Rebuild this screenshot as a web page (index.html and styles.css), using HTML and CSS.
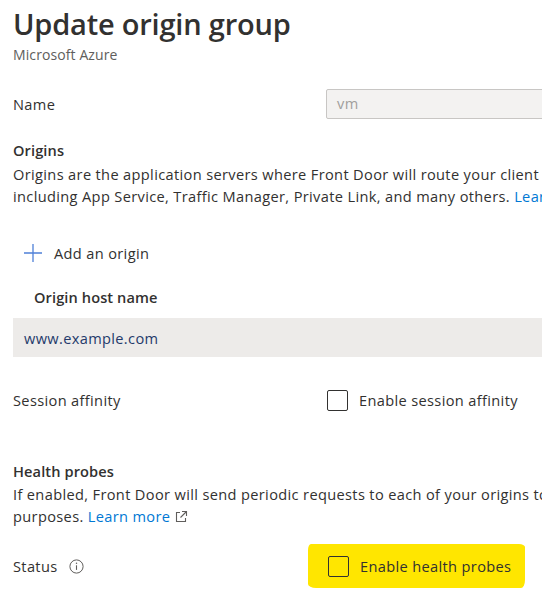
FILE: index.html
```html
<!DOCTYPE html>
<html>
<head>
<meta charset="utf-8">
<link rel="stylesheet" href="styles.css">
</head>
<body>
<div class="page">
  <h1 class="title">Update origin group</h1>
  <div class="subtitle">Microsoft Azure</div>

  <div class="field name-row">
    <div class="label">Name</div>
    <div class="input">vm</div>
  </div>

  <div class="section origins">
    <div class="heading">Origins</div>
    <div class="line">Origins are the application servers where Front Door will route your client</div>
    <div class="line">including App Service, Traffic Manager, Private Link, and many others. <span class="link">Learn more</span></div>
  </div>

  <div class="add">
    <svg class="plus" width="20" height="20" viewBox="0 0 20 20"><path d="M10 1v18M1 10h18" stroke="#4f80d8" stroke-width="1.3" fill="none"/></svg>
    <span>Add an origin</span>
  </div>

  <div class="col-head">Origin host name</div>
  <div class="grid-row">www.example.com</div>

  <div class="field session-row">
    <div class="label">Session affinity</div>
    <div class="check"><span class="box"></span><span>Enable session affinity</span></div>
  </div>

  <div class="section health">
    <div class="heading">Health probes</div>
    <div class="line">If enabled, Front Door will send periodic requests to each of your origins to</div>
    <div class="line">purposes. <span class="link">Learn more</span> <svg class="ext" width="14" height="14" viewBox="0 0 14 14"><path d="M6 2.5H2.5v9h9V8" stroke="#605e5c" stroke-width="1.1" fill="none"/><path d="M8 1.5h4.5V6M12.5 1.5L6.5 7.5" stroke="#605e5c" stroke-width="1.1" fill="none"/></svg></div>
  </div>

  <div class="field status-row">
    <div class="label">Status <svg class="info" width="15" height="15" viewBox="0 0 15 15"><circle cx="7.5" cy="7.5" r="6.6" stroke="#605e5c" stroke-width="1" fill="none"/><path d="M7.5 6.3v4.6" stroke="#605e5c" stroke-width="1.1"/><circle cx="7.5" cy="4.3" r="0.75" fill="#605e5c"/></svg></div>
    <div class="highlight">
      <div class="check"><span class="box"></span><span>Enable health probes</span></div>
    </div>
  </div>
</div>
</body>
</html>
```

FILE: styles.css
```css
html, body {
  margin: 0;
  padding: 0;
  background: #ffffff;
  overflow: hidden;
}
body {
  font-family: "Open Sans", "Noto Sans", "Liberation Sans", sans-serif;
  font-size: 14.6px;
  letter-spacing: 0.35px;
  color: #323130;
  width: 542px;
  height: 598px;
}
.page {
  padding: 6px 0 0 13px;
  width: 900px;
}
.title {
  margin: 0;
  font-size: 29px;
  font-weight: 600;
  line-height: 36px;
  color: #323130;
  letter-spacing: -0.2px;
}
.subtitle {
  font-size: 14px;
  letter-spacing: 0.1px;
  color: #605e5c;
  line-height: 20px;
  margin-top: 3px;
}
.field {
  display: grid;
  grid-template-columns: 313px 1fr;
  align-items: center;
}
.name-row {
  margin-top: 24px;
}
.input {
  width: 300px;
  box-sizing: border-box;
  height: 30px;
  border: 1px solid #c8c6c4;
  border-radius: 2px;
  background: #f3f2f1;
  color: #a19f9d;
  padding-left: 10px;
  line-height: 27px;
}
.section {
  line-height: 22px;
}
.origins {
  margin-top: 20px;
}
.heading {
  font-weight: 600;
  letter-spacing: 0.1px;
  margin-bottom: 2px;
}
.health .heading {
  margin-bottom: 1px;
}
.line {
  white-space: nowrap;
}
.link {
  color: #0078d4;
}
.add {
  display: flex;
  align-items: center;
  gap: 11px;
  margin-top: 34px;
  padding-left: 10px;
  height: 24px;
}
.plus {
  display: block;
}
.col-head {
  font-weight: 600;
  letter-spacing: 0.1px;
  padding-left: 21px;
  margin-top: 21px;
  line-height: 22px;
}
.grid-row {
  margin-top: 10px;
  background: #edebe9;
  height: 39px;
  line-height: 40px;
  padding-left: 11px;
  color: #243a6b;
}
.session-row {
  margin-top: 32px;
}
.check {
  display: flex;
  align-items: center;
  gap: 11px;
  padding-left: 1px;
}
.box {
  display: block;
  width: 21px;
  height: 21px;
  box-sizing: border-box;
  border: 1px solid #323130;
  border-radius: 2px;
}
.health {
  margin-top: 49px;
}
.ext {
  vertical-align: -2px;
  margin-left: -1px;
}
.status-row {
  margin-top: 17px;
  grid-template-columns: 295px 1fr;
}
.label {
  display: flex;
  align-items: center;
  gap: 11px;
  line-height: 22px;
}
.info {
  display: block;
}
.highlight {
  width: 217px;
  height: 44px;
  background: #ffe600;
  display: flex;
  align-items: center;
  padding-left: 19px;
  box-sizing: border-box;
  border-radius: 3px 6px 4px 8px / 6px 3px 8px 4px;
}
```
